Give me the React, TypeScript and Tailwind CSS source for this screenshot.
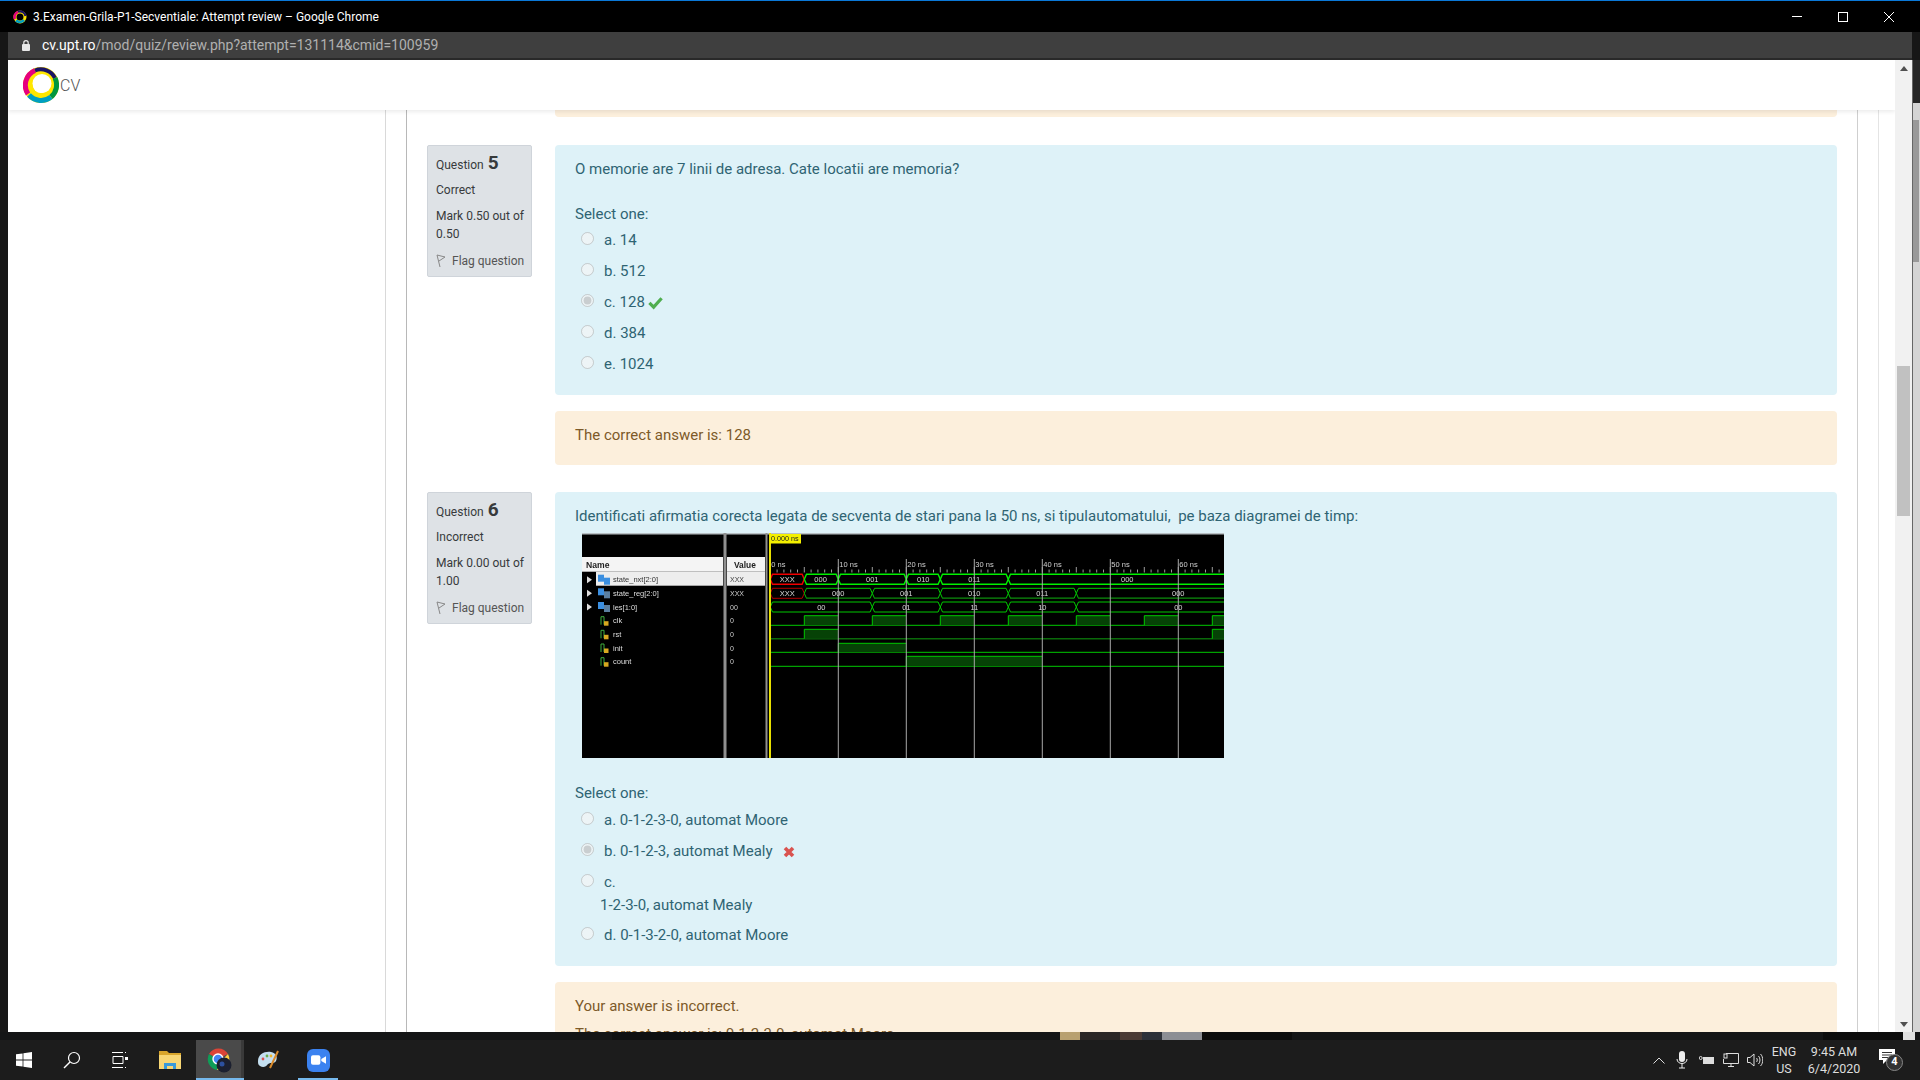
const sans = "font-['Roboto',sans-serif]";

const rowNames = ["state_nxt[2:0]", "state_reg[2:0]", "les[1:0]", "clk", "rst", "init", "count"];
const rowValues = ["XXX", "XXX", "00", "0", "0", "0", "0"];
const rowY = [46.7, 60.3, 74, 87.7, 101.3, 115, 128.7];
const t0 = 189.3;
const ns = 6.8;
const x = (t: number) => t0 + t * ns;

function Bus({ y, from, to, label, labelAt, color = "#00e000", width = 1, dimBottom = false }: { y: number; from: number; to: number; label: string; labelAt: number; color?: string; width?: number; dimBottom?: boolean }) {
  const a = x(from);
  const b = x(to);
  const h = 5;
  const d = `M${a} ${y} L${a + 2.2} ${y - h} L${b - 2.2} ${y - h} L${b} ${y} L${b - 2.2} ${y + h} L${a + 2.2} ${y + h} Z`;
  return (
    <g>
      <path d={d} fill="none" stroke={color} strokeWidth={width} />
      {dimBottom ? <line x1={a + 2.2} x2={b - 2.2} y1={y + h} y2={y + h} stroke="#0a6a0a" strokeWidth="1.4" /> : null}
      <text x={x(labelAt)} y={y + 2.6} fontSize="7.5" fill="#d8d8d8" textAnchor="middle">{label}</text>
    </g>
  );
}

function Pulse({ from, to, low, high }: { from: number; to: number; low: number; high: number }) {
  return (
    <g>
      <rect x={x(from)} y={high} width={(to - from) * ns} height={low - high} fill="#064206" />
      <path d={`M${x(from)} ${low} L${x(from)} ${high} L${x(to)} ${high}`} fill="none" stroke="#00c800" strokeWidth="1" />
    </g>
  );
}

function Waveform() {
  const nxt: [number, number, string, number][] = [[0, 5, "XXX", 2.5], [5, 10, "000", 7.4], [10, 20, "001", 15], [20, 25, "010", 22.5], [25, 35, "011", 30], [35, 72, "000", 52.5]];
  const reg: [number, number, string, number][] = [[0, 5, "XXX", 2.5], [5, 15, "000", 10], [15, 25, "001", 20], [25, 35, "010", 30], [35, 45, "011", 40], [45, 72, "000", 60]];
  const les: [number, number, string, number][] = [[0, 15, "00", 7.5], [15, 25, "01", 20], [25, 35, "11", 30], [35, 45, "10", 40], [45, 72, "00", 60]];
  return (
    <svg viewBox="0 0 643 225" width="643" height="225" className="block blur-[0.35px]" fontFamily="'Liberation Sans', sans-serif">
      <rect x="1" width="642" height="225" fill="#000" />
      <rect x="1" width="642" height="1.5" fill="#b8c0c4" />
      {/* panel dividers */}
      <rect x="142.5" y="0" width="3" height="225" fill="#8f8f8f" />
      <rect x="184.5" y="0" width="2" height="225" fill="#8f8f8f" />
      {/* name + value headers */}
      <rect x="1" y="24" width="141" height="14.7" fill="#f4f4f4" />
      <rect x="146" y="24" width="38" height="14.7" fill="#f4f4f4" />
      <rect x="15" y="38.7" width="127" height="14" fill="#ededed" />
      <rect x="146" y="38.7" width="38" height="14" fill="#ededed" />
      <text x="5" y="34.5" fontSize="8.6" fontWeight="700" fill="#222">Name</text>
      <text x="153" y="34.5" fontSize="8.4" fontWeight="700" fill="#222">Value</text>
      {rowNames.map((name, i) => (
        <g key={name}>
          {i < 3 ? <path d={`M6 ${rowY[i] - 3.5} L6 ${rowY[i] + 3.5} L11 ${rowY[i]} Z`} fill="#ddd" /> : null}
          {i < 3 ? (
            <g>
              <rect x="17" y={rowY[i] - 5} width="6" height="7" fill="#3b8fe0" />
              <rect x="23" y={rowY[i] - 2} width="6" height="7" fill={i === 0 ? "#3b8fe0" : "#5b7fa0"} />
            </g>
          ) : (
            <g>
              <path d={`M20 ${rowY[i] + 4} L20 ${rowY[i] - 4} L23 ${rowY[i] - 4} L23 ${rowY[i] + 4}`} fill="none" stroke="#3fae3f" strokeWidth="1" />
              <rect x="23" y={rowY[i] + 0.5} width="4.5" height="4.5" fill="#d8a820" />
            </g>
          )}
          <text x="32" y={rowY[i] + 2.6} fontSize="7.5" fill={i === 0 ? "#333" : "#ddd"}>{name}</text>
          <text x="149" y={rowY[i] + 2.6} fontSize="7" fill={i === 0 ? "#444" : "#cfcfcf"}>{rowValues[i]}</text>
        </g>
      ))}
      {/* ruler */}
      {Array.from({ length: 67 }, (_, i) => i).map((i) => (
        <line key={i} x1={x(i)} x2={x(i)} y1={i % 5 === 0 ? 34 : 36.5} y2="39.5" stroke="#e0e0e0" strokeWidth="0.7" />
      ))}
      {[0, 10, 20, 30, 40, 50, 60].map((n) => (
        <text key={n} x={x(n) + 1} y="33.5" fontSize="7.5" fill="#cfcfcf">{n} ns</text>
      ))}
      {/* bus rows */}
      {nxt.map(([a, b, label, at], i) => (
        <Bus key={"n" + i} y={46.3} from={a} to={b} label={label} labelAt={at} color={i === 0 ? "#f00000" : "#00f000"} width={1.4} />
      ))}
      {reg.map(([a, b, label, at], i) => (
        <Bus key={"r" + i} y={60.3} from={a} to={b} label={label} labelAt={at} color={i === 0 ? "#b00000" : "#00c800"} dimBottom={i > 0} />
      ))}
      {les.map(([a, b, label, at], i) => (
        <Bus key={"l" + i} y={74} from={a} to={b} label={label} labelAt={at} color="#00c800" />
      ))}
      {/* clk */}
      <line x1={x(0)} x2="643" y1="92.3" y2="92.3" stroke="#00c800" />
      {[5, 15, 25, 35, 45, 55, 65].map((n) => (
        <Pulse key={n} from={n} to={n + 5} low={92.3} high={82.7} />
      ))}
      {/* rst */}
      <line x1={x(0)} x2="643" y1="105.7" y2="105.7" stroke="#0a6a0a" strokeWidth="1.5" />
      <Pulse from={5} to={10} low={105.7} high={96.3} />
      <Pulse from={65} to={70} low={105.7} high={96.3} />
      {/* init */}
      <line x1={x(0)} x2="643" y1="119.3" y2="119.3" stroke="#00c800" />
      <Pulse from={10} to={20} low={119.3} high={110.3} />
      {/* count */}
      <line x1={x(0)} x2="643" y1="133.3" y2="133.3" stroke="#00c800" />
      <Pulse from={20} to={40} low={133.3} high={123.3} />
      {/* grid lines */}
      {[10, 20, 30, 40, 50, 60].map((n) => (
        <line key={n} x1={x(n)} x2={x(n)} y1="26" y2="225" stroke="#a8a8a8" strokeWidth="1" />
      ))}
      {/* cursor */}
      <rect x="188" y="0" width="2" height="225" fill="#e8e000" />
      <rect x="189" y="1" width="31" height="9.5" fill="#f4f000" />
      <text x="190" y="8.4" fontSize="7.2" fill="#222">0.000 ns</text>
    </svg>
  );
}

function Option({ text, checked, mark }: { text: string; checked?: boolean; mark?: "ok" | "bad" }) {
  return (
    <div className="flex h-[31px] items-center pl-[6px]">
      <input type="radio" disabled checked={!!checked} readOnly className="m-0 mr-[10px] size-[13px] -translate-y-[2px]" />
      <span>{text}</span>
      {mark === "ok" ? (
        <svg viewBox="0 0 16 14" className="ml-[3px] size-[15px]"><path d="M1.5 7.5 L6 12 L14.5 2.5" fill="none" stroke="#4fae4f" strokeWidth="3.4" /></svg>
      ) : null}
      {mark === "bad" ? (
        <svg viewBox="0 0 12 12" className="ml-[10px] size-[12px]"><path d="M2 2 L10 10 M10 2 L2 10" fill="none" stroke="#d9534f" strokeWidth="3.6" /></svg>
      ) : null}
    </div>
  );
}

function QuestionInfo({ num, state, mark, total }: { num: number; state: string; mark: string; total: string }) {
  return (
    <div className="h-[132px] w-[105px] shrink-0 rounded-[2px] border border-[#cfd4da] bg-[#dee2e6] pl-[8px] pt-[6px] text-[12px] leading-[18px] text-[#373a3c]">
      <div className="flex h-[26px] items-baseline gap-[4px] pt-[2px]">
        <span>Question</span>
        <span className="text-[19px] font-bold">{num}</span>
      </div>
      <div className="mt-[3px]">{state}</div>
      <div className="mt-[8px]">Mark {mark} out of {total}</div>
      <div className="mt-[9px] flex items-center gap-[6px] whitespace-nowrap text-[#555]">
        <svg viewBox="0 0 10 14" className="h-[14px] w-[10px] shrink-0"><path d="M1 1 L4 13 M1 1 L9 3 L3 7" fill="none" stroke="#888" strokeWidth="1" /></svg>
        Flag question
      </div>
    </div>
  );
}

function Logo() {
  return (
    <svg viewBox="0 0 36 36" className="size-[36px]">
      <circle cx="18" cy="18" r="13" fill="none" stroke="#ffe600" strokeWidth="10" />
      <path d="M5 27 A16 16 0 0 1 12 3.5" fill="none" stroke="#e6007e" strokeWidth="5" />
      <path d="M12 3.5 A16 16 0 0 1 32 11" fill="none" stroke="#1b1464" strokeWidth="4" />
      <path d="M32 11 A16 16 0 0 1 28 30" fill="none" stroke="#00963f" strokeWidth="5" />
      <path d="M28 30 A16 16 0 0 1 6 28" fill="none" stroke="#009fc2" strokeWidth="5" />
      <circle cx="19" cy="16.5" r="9.5" fill="#fff" />
    </svg>
  );
}

function Taskbar() {
  return (
    <div className="flex h-10 items-center bg-[#1c1c1c] text-white">
      <div className="flex w-[48px] justify-center">
        <svg viewBox="0 0 16 16" className="size-4"><path d="M0 2.3 L6.6 1.4 V7.6 H0Z M7.4 1.3 L16 0 V7.6 H7.4Z M0 8.4 H6.6 V14.6 L0 13.7Z M7.4 8.4 H16 V16 L7.4 14.7Z" fill="#fff" /></svg>
      </div>
      <div className="flex w-[48px] justify-center">
        <svg viewBox="0 0 18 18" className="size-[18px]"><circle cx="11" cy="7" r="5.5" fill="none" stroke="#fff" strokeWidth="1.2" /><path d="M7 11 L1 17" stroke="#fff" strokeWidth="1.4" /></svg>
      </div>
      <div className="flex w-[48px] justify-center">
        <svg viewBox="0 0 16 16" className="size-[16px]"><path d="M0 .5 H11 M13 .5 H14 M1 4.5 H11 V11.5 H1Z M0 15.5 H11 M13 15.5 H14" fill="none" stroke="#fff" /><rect x="13" y="5" width="3" height="3" fill="#fff" /></svg>
      </div>
      <div className="flex w-[52px] justify-center">
        <svg viewBox="0 0 22 18" className="h-[18px] w-[22px]"><path d="M0 0 H8 L10 2 H22 V18 H0Z" fill="#d9a62c" /><path d="M0 4 H22 V18 H0Z" fill="#f8d775" /><path d="M5 18 V12 H17 V18 H14 V15 H8 V18Z" fill="#3a9ad9" /></svg>
      </div>
      <div className="relative flex h-10 w-[48px] items-center justify-center border-r-[3px] border-[#3a3a3a] bg-[#4a4a4a]">
        <svg viewBox="0 0 26 26" className="size-[26px]">
          <path d="M12 12 L3 7 A11 11 0 0 1 22 7Z" fill="#db4437" />
          <path d="M3 7 A11 11 0 0 0 11 23 L14 14Z" fill="#0f9d58" />
          <path d="M22 7 A11 11 0 0 1 11 23 L15 14Z" fill="#ffcd40" />
          <circle cx="12" cy="12" r="5" fill="#4285f4" stroke="#fff" strokeWidth="1.4" />
          <circle cx="18" cy="18" r="7.5" fill="#1c2030" />
          <circle cx="16" cy="17" r="2.5" fill="#2c50a0" />
        </svg>
        <div className="absolute inset-x-0 bottom-0 -mr-[3px] h-[2px] bg-[#76b9ed]" />
      </div>
      <div className="flex w-[50px] justify-center">
        <svg viewBox="0 0 24 24" className="size-[24px]"><path d="M1 13 C1 6 8 3 14 4 C19 5 21 9 19 13 C17 16 14 14 11 16 C9 19 6 20 3 18 C1 17 1 15 1 13Z" fill="#c4dff0" /><circle cx="6" cy="11" r="1.4" fill="#d9534f" /><circle cx="10" cy="8" r="1.4" fill="#6ab04c" /><circle cx="14" cy="8" r="1.4" fill="#f0b429" /><path d="M13 20 L21 3" stroke="#d98a2b" strokeWidth="2" /></svg>
      </div>
      <div className="relative flex h-10 w-[48px] items-center justify-center">
        <div className="flex size-[23px] items-center justify-center rounded-[6px] bg-[#3b82f0]">
          <svg viewBox="0 0 16 10" className="h-[10px] w-[15px]"><rect width="10" height="10" rx="2" fill="#fff" /><path d="M11 4 L16 1 V9 L11 6Z" fill="#fff" /></svg>
        </div>
        <div className="absolute inset-x-[4px] bottom-0 h-[2px] bg-[#76b9ed]" />
      </div>

      <div className={`ml-auto flex items-center text-[12.5px] ${sans}`}>
        <svg viewBox="0 0 12 7" className="mr-[11px] h-[7px] w-[12px]"><path d="M.5 6.5 L6 1 L11.5 6.5" fill="none" stroke="#ddd" strokeWidth="1" /></svg>
        <svg viewBox="0 0 12 18" className="mr-[11px] h-[18px] w-[12px]"><rect x="3" y="0" width="6" height="11" rx="3" fill="#eee" /><path d="M1 8 C1 14 11 14 11 8 M6 13 V17 M3 17 H9" fill="none" stroke="#eee" /></svg>
        <svg viewBox="0 0 16 11" className="mr-[8px] h-[11px] w-[16px]"><rect x="4" y="2" width="11" height="7" fill="#ddd" /><circle cx="1.7" cy="3" r="1.5" fill="none" stroke="#ddd" /></svg>
        <svg viewBox="0 0 16 14" className="mr-[8px] h-[14px] w-[16px]"><path d="M3 .5 H15.5 V10.5 H.5 V6 M8 10.5 V13.5 M5 13.5 H11" fill="none" stroke="#ddd" /><rect x="1" y="1" width="3" height="4" fill="none" stroke="#ddd" /></svg>
        <svg viewBox="0 0 16 14" className="mr-[9px] h-[14px] w-[16px]"><path d="M.5 4.5 H3 L7 1 V13 L3 9.5 H.5Z M9.5 5 C10.5 6 10.5 8 9.5 9 M11.5 3 C13.5 5 13.5 9 11.5 11 M13.5 1 C16.5 4 16.5 10 13.5 13" fill="none" stroke="#ddd" /></svg>
        <div className="flex w-[24px] flex-col items-center leading-[17px] text-[#ddd]">
          <span>ENG</span>
          <span>US</span>
        </div>
        <div className="ml-[15px] flex w-[46px] flex-col items-center leading-[17px] text-[#ddd]">
          <span className="whitespace-nowrap">9:45 AM</span>
          <span>6/4/2020</span>
        </div>
        <div className="relative ml-[22px] mr-[19px] size-[22px]">
          <svg viewBox="0 0 16 15" className="h-[15px] w-[16px]"><path d="M0 0 H16 V11 H8 L4 15 V11 H0Z" fill="#fff" /><path d="M3 3.5 H13 M3 6 H13 M3 8.5 H9" stroke="#333" /></svg>
          <span className="absolute left-[7px] top-[5px] flex size-[17px] items-center justify-center rounded-full border border-[#888] bg-[#333] text-[11px] font-bold">4</span>
        </div>
      </div>
    </div>
  );
}

export default function App() {
  return (
    <div className={`flex h-screen w-full flex-col overflow-hidden bg-[#161616] ${sans}`}>
      {/* chrome title bar */}
      <div className="flex h-[32px] shrink-0 items-center border-t border-[#0a78d7] bg-black pl-[13px] text-[12px] text-white">
        <svg viewBox="0 0 14 14" className="mr-[6px] size-[14px]">
          <circle cx="7" cy="7" r="5" fill="none" stroke="#ffe600" strokeWidth="3" />
          <path d="M2 9 A5.5 5.5 0 0 1 5 1.8" fill="none" stroke="#e6007e" strokeWidth="2.5" />
          <path d="M5 1.8 A5.5 5.5 0 0 1 12.5 6" fill="none" stroke="#1b1464" strokeWidth="2.2" />
          <path d="M11 10 A5.5 5.5 0 0 1 3 10.5" fill="none" stroke="#009fc2" strokeWidth="2.5" />
        </svg>
        <span>3.Examen-Grila-P1-Secventiale: Attempt review – Google Chrome</span>
        <div className="ml-auto flex items-center gap-[36px] pr-[26px]">
          <div className="h-px w-[10px] bg-white" />
          <div className="size-[10px] border border-white" />
          <svg viewBox="0 0 10 10" className="size-[10px]"><path d="M0 0 L10 10 M10 0 L0 10" stroke="#fff" strokeWidth="1" /></svg>
        </div>
      </div>
      {/* address bar */}
      <div className="ml-[8px] mr-[8px] flex h-[28px] shrink-0 items-center border-b-2 border-[#292929] bg-[#3f3f3f] pl-[14px] text-[14px]">
        <svg viewBox="0 0 8 11" className="mr-[12px] h-[11px] w-[8px]"><rect y="4" width="8" height="7" rx="1" fill="#e8e8e8" /><path d="M1.8 4 V2.8 A2.2 2.2 0 0 1 6.2 2.8 V4" fill="none" stroke="#e8e8e8" strokeWidth="1.2" /></svg>
        <span className="text-white">cv.upt.ro</span>
        <span className="text-[#b0b0b0]">/mod/quiz/review.php?attempt=131114&amp;cmid=100959</span>
      </div>

      {/* browser window */}
      <div className="flex h-[972px] shrink-0">
        <div className="w-[8px] shrink-0 bg-[#171717]" />
        <div className="flex w-[1887px] shrink-0 flex-col overflow-hidden bg-white">
          <div className="z-10 flex h-[50px] shrink-0 items-center bg-white pl-[15px] shadow-[0_2px_4px_rgba(0,0,0,0.08)]">
            <Logo />
            <span className="ml-[1px] pt-[2px] text-[16px] font-light text-[#555]">CV</span>
          </div>
          <div className="flex min-h-0 flex-1 overflow-hidden">
            <div className="h-full w-[378px] shrink-0 border-r border-[#d9d9d9]" />
            <div className="h-full w-[21px] shrink-0 border-r border-[#b8b8b8]" />
            <div className="flex w-[1450px] shrink-0 flex-col pl-[20px] text-[15px] leading-[22.5px]">
              <div className="ml-[128px] mr-[20px] h-[7px] shrink-0 rounded-b-[4px] bg-[#fcefdc]" />

              <div className="mt-[28px] flex shrink-0 gap-[23px]">
                <QuestionInfo num={5} state="Correct" mark="0.50" total="0.50" />
                <div className="w-[1282px]">
                  <div className="h-[250px] rounded-[4px] bg-[#def2f8] px-[20px] pt-[13px] text-[#2f6473]">
                    <p>O memorie are 7 linii de adresa. Cate locatii are memoria?</p>
                    <p className="mt-[22px]">Select one:</p>
                    <div>
                      <Option text="a. 14" />
                      <Option text="b. 512" />
                      <Option text="c. 128" checked mark="ok" />
                      <Option text="d. 384" />
                      <Option text="e. 1024" />
                    </div>
                  </div>
                  <div className="mt-[16px] h-[54px] rounded-[4px] bg-[#fcefdc] px-[20px] pt-[13px] text-[#7d5a29]">
                    The correct answer is: 128
                  </div>
                </div>
              </div>

              <div className="mt-[27px] flex shrink-0 gap-[23px]">
                <QuestionInfo num={6} state="Incorrect" mark="0.00" total="1.00" />
                <div className="w-[1282px]">
                  <div className="h-[474px] rounded-[4px] bg-[#def2f8] px-[20px] pt-[13px] text-[#2f6473]">
                    <p>Identificati afirmatia corecta legata de secventa de stari pana la 50 ns, si tipulautomatului,&nbsp; pe baza diagramei de timp:</p>
                    <div className="ml-[6px] mt-[5px]"><Waveform /></div>
                    <p className="mt-[24px]">Select one:</p>
                    <div className="mt-[1px]">
                      <Option text="a. 0-1-2-3-0, automat Moore" />
                      <Option text="b. 0-1-2-3, automat Mealy" checked mark="bad" />
                      <Option text="c." />
                      <p className="-mt-[4px] mb-[3px] pl-[25px]">1-2-3-0, automat Mealy</p>
                      <Option text="d. 0-1-3-2-0, automat Moore" />
                    </div>
                  </div>
                  <div className="mt-[16px] h-[90px] rounded-[4px] bg-[#fcefdc] px-[20px] pt-[13px] text-[#7d5a29]">
                    <p>Your answer is incorrect.</p>
                    <p className="mt-[5px]">The correct answer is: 0-1-2-3-0, automat Moore</p>
                  </div>
                </div>
              </div>
            </div>
            <div className="h-full w-[21px] shrink-0 border-l border-[#cfcfcf]" />
            <div className="h-full flex-1 border-l border-[#e4e4e4]" />
          </div>
        </div>
        {/* scrollbar */}
        <div className="flex w-[17px] shrink-0 flex-col items-center bg-[#f1f1f1]">
          <div className="mt-[6px] size-0 border-x-[4px] border-b-[5px] border-x-transparent border-b-[#505050]" />
          <div className="mt-[295px] h-[150px] w-[13px] bg-[#c1c1c1]" />
          <div className="mb-[5px] mt-auto size-0 border-x-[4px] border-t-[5px] border-x-transparent border-t-[#505050]" />
        </div>
        {/* edge of the window behind */}
        <div className="flex flex-1 flex-col border-l border-[#666]">
          <div className="h-[43px] bg-[#262626]" />
          <div className="flex-1 bg-[#d4d4d4] pl-0 pt-[17px]">
            <div className="h-[142px] w-[6px] bg-[#999]" />
          </div>
        </div>
      </div>

      {/* strip of the window behind */}
      <div className="flex h-[8px] shrink-0 bg-[#141516]">
        <div className="ml-[612px] w-[188px] bg-[#0f1011]" />
        <div className="w-[60px] bg-[#111213]" />
        <div className="ml-[200px] flex w-[142px]">
          <div className="w-[20px] bg-[#b8a070]" />
          <div className="w-[40px] bg-[#2a2624]" />
          <div className="w-[22px] bg-[#4a3a34]" />
          <div className="w-[20px] bg-[#2c3038]" />
          <div className="w-[40px] bg-[#8c8e94]" />
        </div>
        <div className="w-[90px] bg-[#0c0c0c]" />
        <div className="ml-[531px] w-[80px] bg-[#0c0c0c]" />
        <div className="w-[12px] bg-[#e0e0e0]" />
      </div>
      <Taskbar />
    </div>
  );
}
